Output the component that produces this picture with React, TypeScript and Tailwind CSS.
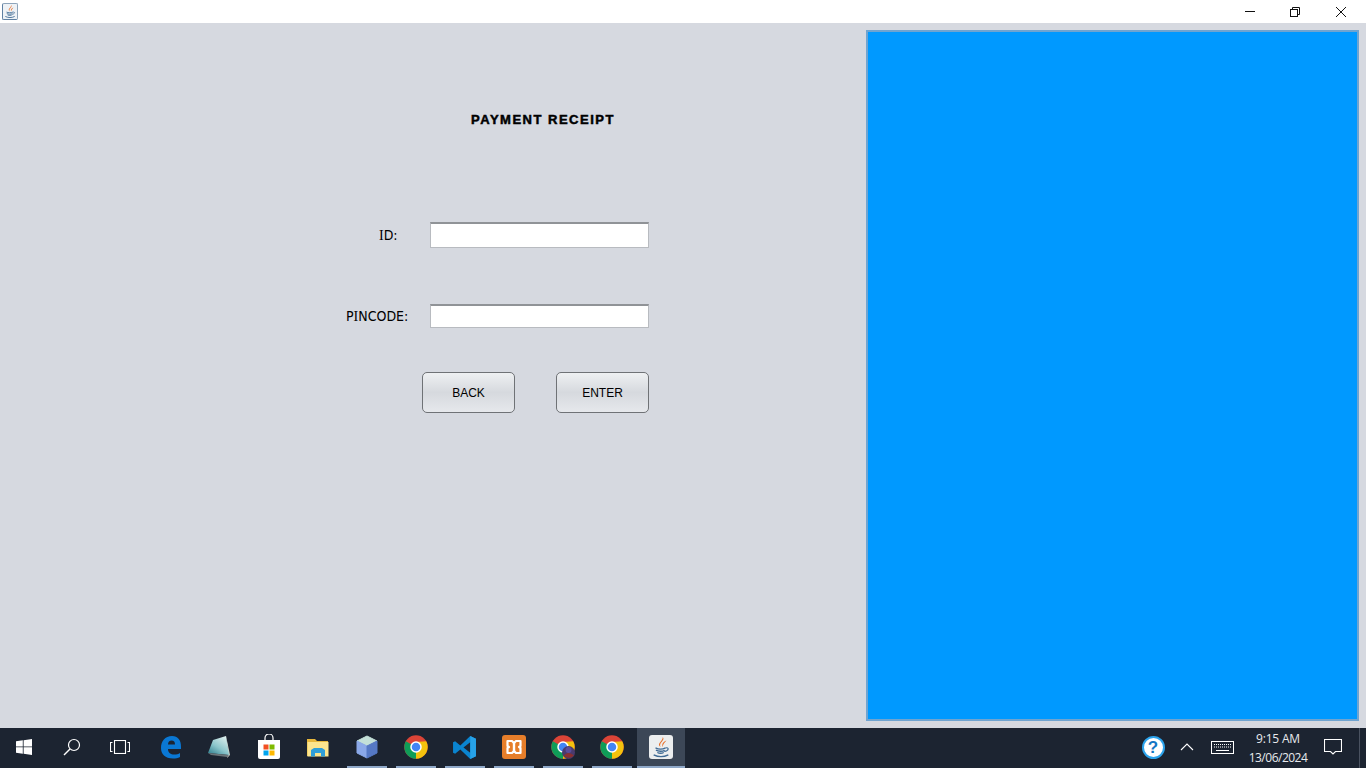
import React from "react";

const sans = "font-['Liberation_Sans',Arial,sans-serif]";
const tahoma = "font-['DejaVu_Sans_Condensed','DejaVu_Sans',sans-serif]";
const serifI = "font-['Liberation_Serif',serif]";

function Slot({ children, bar, active, w = "w-[49px]" }: { children: React.ReactNode; bar?: boolean; active?: boolean; w?: string }) {
  return (
    <div className={`${w} h-10 shrink-0 flex flex-col items-center ${active ? "bg-[#3c4757]" : ""}`}>
      <div className="flex-1 flex items-center justify-center w-full">{children}</div>
      <div className={`h-[2px] ${active ? "w-full bg-[#8fa8c8]" : bar ? "w-[40px] bg-[#8fa8c8]" : "w-full"}`} />
    </div>
  );
}

function Chrome({ badge }: { badge?: boolean }) {
  return (
    <svg width="24" height="24" viewBox="0 0 48 48">
      <circle cx="24" cy="24" r="23.500" fill="#db4437" />
      <path d="M24 24 L3.600 12.500 A23.500 23.500 0 0 0 24 47.500 Z" fill="#0f9d58" />
      <path d="M24 14 L44.400 12.500 A23.500 23.500 0 0 1 24 47.500 L24 24 Z" fill="#f4c20d" />
      <circle cx="24" cy="24" r="11.500" fill="#ffffff" />
      <circle cx="24" cy="24" r="8.500" fill="#4285f4" />
      {badge && (
        <g>
          <circle cx="35" cy="35" r="13" fill="#4a3a6e" />
          <circle cx="35" cy="30" r="6" fill="#5a4c9c" />
          <path d="M25 41 Q35 31 46 41 Q36 50 25 41Z" fill="#8a3030" />
        </g>
      )}
    </svg>
  );
}

function JavaCup({ size }: { size: number }) {
  return (
    <svg width={size} height={size} viewBox="0 0 24 24">
      <path d="M14 1 C17 5 9 7 11.500 12 C6.500 8 14 6 14 1Z" fill="#e8702a" />
      <path d="M18 5 C14 6.500 12.500 9 14 12 C14 9 16 7.500 18 5Z" fill="#e8702a" />
      <path d="M6 13 C9 14.500 14 14.500 17 13 M6.500 15.500 C9 17 14 17 16 15.500 M8 18 C10 19 13 19 15 18" stroke="#3f6a94" strokeWidth="1.500" fill="none" />
      <path d="M17 13 C21 12 21 16 15.500 17" stroke="#3f6a94" strokeWidth="1.200" fill="none" />
      <path d="M4 20.500 C9 23 15 23 20 20.500" stroke="#3f6a94" strokeWidth="1.500" fill="none" />
    </svg>
  );
}

export default function App() {
  return (
    <div className={`w-[1366px] h-[768px] overflow-hidden flex flex-col bg-[#d6d9e0] ${sans}`}>
      {/* Title bar */}
      <div className="h-[23px] bg-white flex items-center shrink-0 pr-[2px]">
        <div className="ml-[2px] w-4 h-[17px] border border-[#8ea4ba] border-b-[#5f80a2] border-l-[#5f80a2] rounded-[2px] bg-[#eef2f6] flex items-center justify-center">
          <JavaCup size={15} />
        </div>
        <div className="flex-1" />
        <div className="w-[45px] flex justify-center">
          <svg width="12" height="12" viewBox="0 0 12 12"><path d="M1 5.500H11" stroke="#111" strokeWidth="1" /></svg>
        </div>
        <div className="w-[46px] flex justify-center">
          <svg width="12" height="12" viewBox="0 0 12 12" fill="none" stroke="#111"><rect x="1.500" y="3.500" width="7" height="7" /><path d="M3.500 3.500V1.500H10.500V8.500H8.500" /></svg>
        </div>
        <div className="w-[46px] flex justify-center">
          <svg width="12" height="12" viewBox="0 0 12 12" stroke="#111"><path d="M1 1L11 11M11 1L1 11" /></svg>
        </div>
      </div>

      {/* Main */}
      <div className="flex-1 flex min-h-0">
        <div className="w-[866px] shrink-0">
          <h1 className="mt-[89px] ml-[471px] h-4 leading-4 text-[13px] font-bold tracking-[1.5px] text-black whitespace-nowrap [-webkit-text-stroke:0.5px_black]">
            PAYMENT RECEIPT
          </h1>
          <div className="ml-[346px] mt-[94px] flex flex-col">
            <div className="flex items-center h-[26px]">
              <span className={`w-[84px] pl-[33px] ${tahoma} text-[14px] text-black`}><span className={serifI}>I</span>D:</span>
              <div className="w-[219px] h-[26px] bg-white border border-[#b8bbc0] border-t-2 border-t-[#909397]" />
            </div>
            <div className="flex items-center h-6 mt-[56px]">
              <span className={`w-[84px] ${tahoma} text-[14px] text-black`}>P<span className={serifI}>I</span>NCODE:</span>
              <div className="w-[219px] h-6 bg-white border border-[#b8bbc0] border-t-2 border-t-[#909397]" />
            </div>
            <div className="flex ml-[76px] mt-[44px] gap-[41px]">
              <button className="w-[93px] h-[41px] rounded-[5px] border border-[#6f7276] bg-gradient-to-b from-[#eef0f2] via-[#d6d9de] to-[#e6e8ec] text-[12px] text-black">BACK</button>
              <button className="w-[93px] h-[41px] rounded-[5px] border border-[#6f7276] bg-gradient-to-b from-[#eef0f2] via-[#d6d9de] to-[#e6e8ec] text-[12px] text-black">ENTER</button>
            </div>
          </div>
        </div>
        <div className="w-[493px] h-[691px] mt-[7px] bg-[#0099ff] border-2 border-[#70a4d0] shrink-0" />
      </div>

      {/* Taskbar */}
      <div className="h-10 bg-[#1c2431] flex shrink-0">
        <Slot w="w-12">
          <svg width="16" height="16" viewBox="0 0 16 16" fill="#fff"><path d="M0 2.300L6.800 1.300V7.500H0ZM7.600 1.200L16 0V7.500H7.600ZM0 8.300H6.800V14.700L0 13.700ZM7.600 8.300H16V16L7.600 14.800Z" /></svg>
        </Slot>
        <Slot w="w-12">
          <svg width="18" height="18" viewBox="0 0 18 18" fill="none" stroke="#fff" strokeWidth="1.200"><circle cx="11" cy="7" r="5.500" /><path d="M7 11L1 17" strokeWidth="1.500" /></svg>
        </Slot>
        <Slot w="w-12">
          <svg width="20" height="14" viewBox="0 0 20 14" fill="none" stroke="#fff" strokeWidth="1.100"><rect x="4.500" y="0.500" width="11" height="13" /><path d="M2.500 2.500H0.500V11.500H2.500M17.500 2.500H19.500V11.500H17.500" /></svg>
        </Slot>
        <div className="w-[2px] shrink-0" />
        <Slot>
          <svg width="22" height="24" viewBox="0 0 22 24"><path d="M1 13C1 6 5 1 12 1C18 1 21 5 21 12V14H8C8 18 11 19.500 14 19.500C16.500 19.500 18.500 19 20 18V22C18 23 15.500 23.500 13 23.500C5 23.500 1 19 1 13ZM8 9.500H15C15 7 14 5.500 11.500 5.500C9.500 5.500 8 7 8 9.500Z" fill="#0a78d4" /></svg>
        </Slot>
        <Slot>
          <div className="mr-[1px]">
            <svg width="23" height="24" viewBox="0 0 23 24">
              <defs><linearGradient id="pad" x1="0.800" y1="0" x2="0.100" y2="1"><stop offset="0" stopColor="#dff0ee" /><stop offset="0.55" stopColor="#8cc6cb" /><stop offset="1" stopColor="#2f7f8e" /></linearGradient></defs>
              <path d="M18 1L22 20L19 23L20 19Z" fill="#cfcfc4" />
              <path d="M5 5L18 1L21 20L0 18Z" fill="url(#pad)" />
              <path d="M0 18L21 20L19 22L3 20Z" fill="#6a7478" />
            </svg>
          </div>
        </Slot>
        <Slot>
          <svg width="24" height="26" viewBox="0 0 24 26"><path d="M8 8V4A4 4 0 0 1 16 4V8" stroke="#fff" strokeWidth="1.200" fill="none" /><path d="M1 6H23V23A2 2 0 0 1 21 25H3A2 2 0 0 1 1 23Z" fill="#fff" /><rect x="6.500" y="10.500" width="5" height="5" fill="#f25022" /><rect x="12.500" y="10.500" width="5" height="5" fill="#7fba00" /><rect x="6.500" y="16.500" width="5" height="5" fill="#00a4ef" /><rect x="12.500" y="16.500" width="5" height="5" fill="#ffb900" /></svg>
        </Slot>
        <Slot>
          <svg width="22" height="19" viewBox="0 0 22 19"><path d="M0 1H8L10 3H21V18H0Z" fill="#e8b83c" /><rect x="0.500" y="4" width="21" height="14.500" fill="#fce58e" /><path d="M4 18.500V12L7 10H15L18 12V18.500H14V15H8V18.500Z" fill="#2f9fd8" /></svg>
        </Slot>
        <Slot bar>
          <svg width="22" height="24" viewBox="0 0 22 24">
            <path d="M11 1L21 6L11 11L1 6Z" fill="#c3e0d8" stroke="#c3e0d8" strokeLinejoin="round" />
            <path d="M1 6L11 11V23L1 18Z" fill="#8aa8e8" stroke="#8aa8e8" strokeLinejoin="round" />
            <path d="M21 6L11 11V23L21 18Z" fill="#5578c4" stroke="#5578c4" strokeLinejoin="round" />
          </svg>
        </Slot>
        <Slot bar><Chrome /></Slot>
        <Slot bar>
          <svg width="25" height="25" viewBox="0 0 24 24"><path d="M17.500 1L23 3.500V20.500L17.500 23L8 14L3 18L1 17V7L3 6L8 10ZM17.500 7L11 12L17.500 17Z" fill="#0a84cf" /><path d="M17.500 1L23 3.500V20.500L17.500 23Z" fill="#27a2e8" /></svg>
        </Slot>
        <Slot bar>
          <svg width="24" height="24" viewBox="0 0 24 24">
            <rect width="24" height="24" rx="3" fill="#e67e2a" />
            <path d="M5.500 6H10L12 8L14 6H18.500V11L17 12L18.500 13V18H14L12 16L10 18H5.500V13L7 12L5.500 11Z" fill="#e67e2a" stroke="#fff" strokeWidth="2.200" strokeLinejoin="round" />
            <path d="M12 8V16" stroke="#fff" strokeWidth="2.400" />
          </svg>
        </Slot>
        <Slot bar><Chrome badge /></Slot>
        <Slot bar><Chrome /></Slot>
        <div className="w-px shrink-0" />
        <Slot active w="w-[48px]">
          <div className="w-6 h-6 rounded-[3px] bg-[#eceeef] flex items-center justify-center"><JavaCup size={22} /></div>
        </Slot>

        <div className="flex-1" />

        <Slot w="w-[34px]">
          <div className="w-[23px] h-[23px] rounded-full bg-white border-2 border-[#2ba3ec] flex items-center justify-center text-[17px] font-bold leading-none text-[#1577c4]">?</div>
        </Slot>
        <Slot w="w-[34px]">
          <svg width="14" height="8" viewBox="0 0 14 8" fill="none" stroke="#fff" strokeWidth="1.100"><path d="M1 7L7 1L13 7" /></svg>
        </Slot>
        <Slot w="w-[36px]">
          <svg width="23" height="13" viewBox="0 0 23 13" fill="none" stroke="#fff"><rect x="0.500" y="0.500" width="22" height="12" /><path d="M3 3.500H20M3 6H20" strokeDasharray="1 1" /><path d="M5 9.500H18" /></svg>
        </Slot>
        <div className="w-[76px] h-10 flex flex-col items-center justify-center font-['Open_Sans',sans-serif] text-[12px] leading-[19px] text-[#e8eaed] whitespace-nowrap">
          <span className="tracking-[-0.2px]">9:15 AM</span>
          <span className="tracking-[-0.5px]">13/06/2024</span>
        </div>
        <Slot w="w-[34px]">
          <svg width="18" height="16" viewBox="0 0 18 16" fill="none" stroke="#fff" strokeWidth="1.100"><path d="M0.500 0.500H17.500V12.500H11.500L9 15L6.500 12.500H0.500Z" /></svg>
        </Slot>
        <div className="w-4 shrink-0 flex justify-center pl-[2px]"><div className="w-px h-10 bg-[#4a5260]" /></div>
      </div>
    </div>
  );
}
